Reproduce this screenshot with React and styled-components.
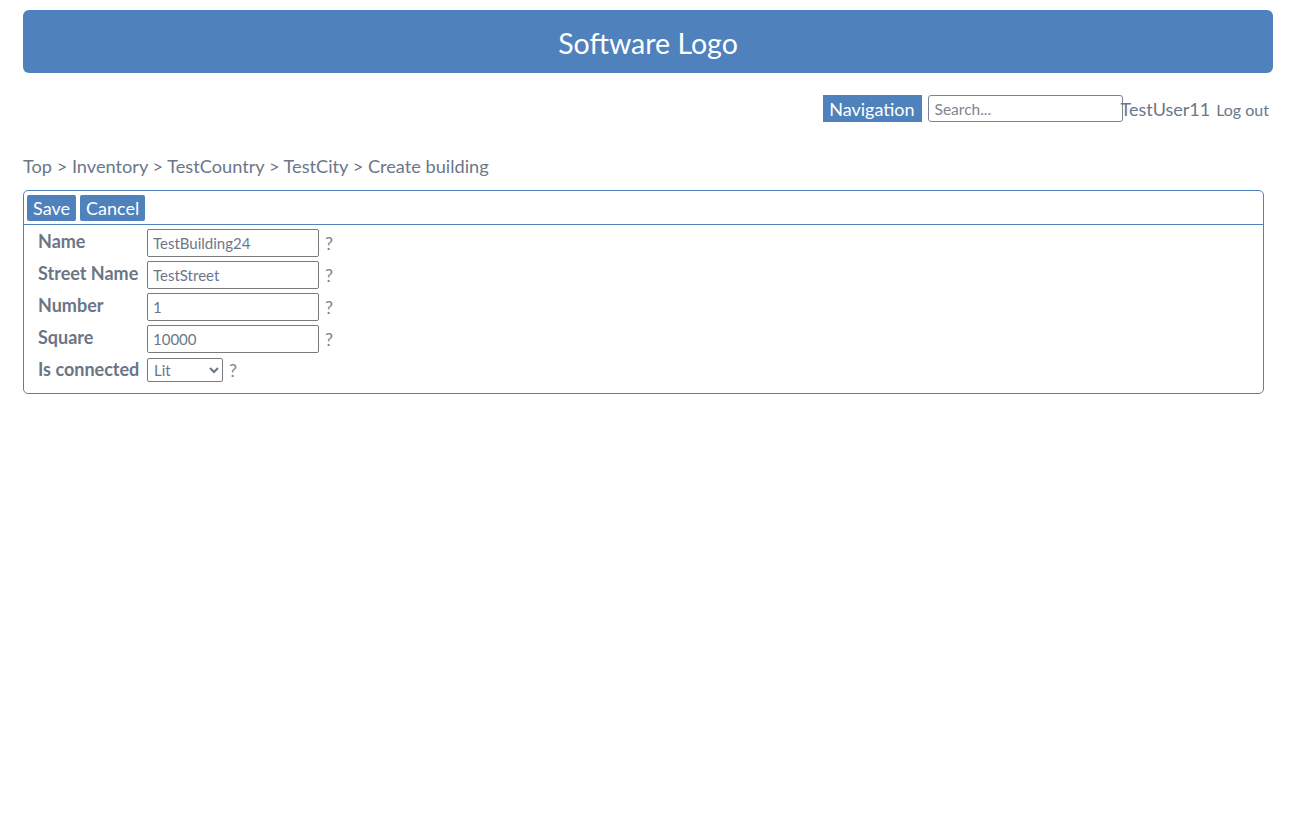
import React from "react";
import styled, { createGlobalStyle } from "styled-components";

const Global = createGlobalStyle`
  html, body { margin: 0; padding: 0; background: #fff; }
  body { font-family: Lato, "Open Sans", sans-serif; color: #6b7789; }
  * { box-sizing: border-box; }
`;

const Page = styled.div`
  padding: 10px 22px 0 23px;
`;

const Header = styled.header`
  height: 63px;
  background: #4f81bd;
  border-radius: 6px;
  display: flex;
  align-items: center;
  justify-content: center;
  color: #fff;
  font-size: 28.5px;
  padding-top: 2px;
`;

const NavRow = styled.div`
  display: flex;
  justify-content: flex-end;
  align-items: center;
  margin-top: 22px;
  padding-right: 4px;
  height: 27px;
`;

const NavButton = styled.button`
  height: 27px;
  padding: 0 7px 0 6px;
  border: none;
  background: #4f81bd;
  color: #fff;
  font-family: inherit;
  font-size: 18px;
  margin-right: 6px;
`;

const Search = styled.input`
  width: 195px;
  height: 27px;
  border: 1px solid #7a8494;
  border-radius: 3px;
  padding: 0 6px;
  font-family: inherit;
  font-size: 15.5px;
  color: #6b7789;
  &::placeholder { color: #7d8593; }
`;

const User = styled.span`
  font-size: 18px;
  margin-left: -2px;
`;

const Logout = styled.a`
  font-size: 16px;
  margin-left: 6px;
  margin-top: 2px;
  color: #6b7789;
`;

const Crumbs = styled.div`
  margin-top: 33px;
  font-size: 18.2px;
  line-height: 22px;
`;

const Box = styled.div`
  margin-top: 13px;
  margin-right: 9px;
  border: 1px solid #4f81bd;
  border-radius: 5px;
`;

const Toolbar = styled.div`
  display: flex;
  gap: 4px;
  padding: 4px 3px 3px;
  border-bottom: 1px solid #4f81bd;
`;

const ToolButton = styled.button`
  height: 26px;
  padding: 0 6px;
  border: none;
  border-radius: 2px;
  background: #4f81bd;
  color: #fff;
  font-family: inherit;
  font-size: 18px;
`;

const Fields = styled.div`
  display: grid;
  grid-template-columns: 109px auto;
  row-gap: 4px;
  padding: 4px 0 10px 14px;
  justify-content: start;
`;

const Label = styled.label`
  font-weight: 700;
  font-size: 18px;
  line-height: 28px;
  align-self: start;
  margin-top: -2px;
  color: #6b7585;
  white-space: nowrap;
`;

const Control = styled.div`
  display: flex;
  align-items: center;
  gap: 6px;
`;

const TextInput = styled.input`
  width: 172px;
  height: 28px;
  border: 1px solid #7a7a7a;
  border-radius: 2px;
  padding: 0 5px;
  font-family: inherit;
  font-size: 15px;
  color: #6b7789;
`;

const Select = styled.select`
  width: 76px;
  height: 24px;
  border: 1px solid #7a7a7a;
  border-radius: 2px;
  padding: 0 2px;
  font-family: inherit;
  font-size: 15px;
  color: #6b7789;
  background: #fff;
`;

const Help = styled.span`
  font-size: 18px;
  color: #7d8593;
`;

const fields = [
  ["Name", "TestBuilding24"],
  ["Street Name", "TestStreet"],
  ["Number", "1"],
  ["Square", "10000"],
];

export default function App() {
  return (
    <>
      <Global />
      <Page>
        <Header>Software Logo</Header>
        <NavRow>
          <NavButton>Navigation</NavButton>
          <Search placeholder="Search..." />
          <User>TestUser11</User>
          <Logout>Log out</Logout>
        </NavRow>
        <Crumbs>Top &gt; Inventory &gt; TestCountry &gt; TestCity &gt; Create building</Crumbs>
        <Box>
          <Toolbar>
            <ToolButton>Save</ToolButton>
            <ToolButton>Cancel</ToolButton>
          </Toolbar>
          <Fields>
            {fields.map(([l, v]) => (
              <React.Fragment key={l}>
                <Label>{l}</Label>
                <Control>
                  <TextInput defaultValue={v} />
                  <Help>?</Help>
                </Control>
              </React.Fragment>
            ))}
            <Label>Is connected</Label>
            <Control>
              <Select defaultValue="Lit">
                <option>Lit</option>
              </Select>
              <Help>?</Help>
            </Control>
          </Fields>
        </Box>
      </Page>
    </>
  );
}
